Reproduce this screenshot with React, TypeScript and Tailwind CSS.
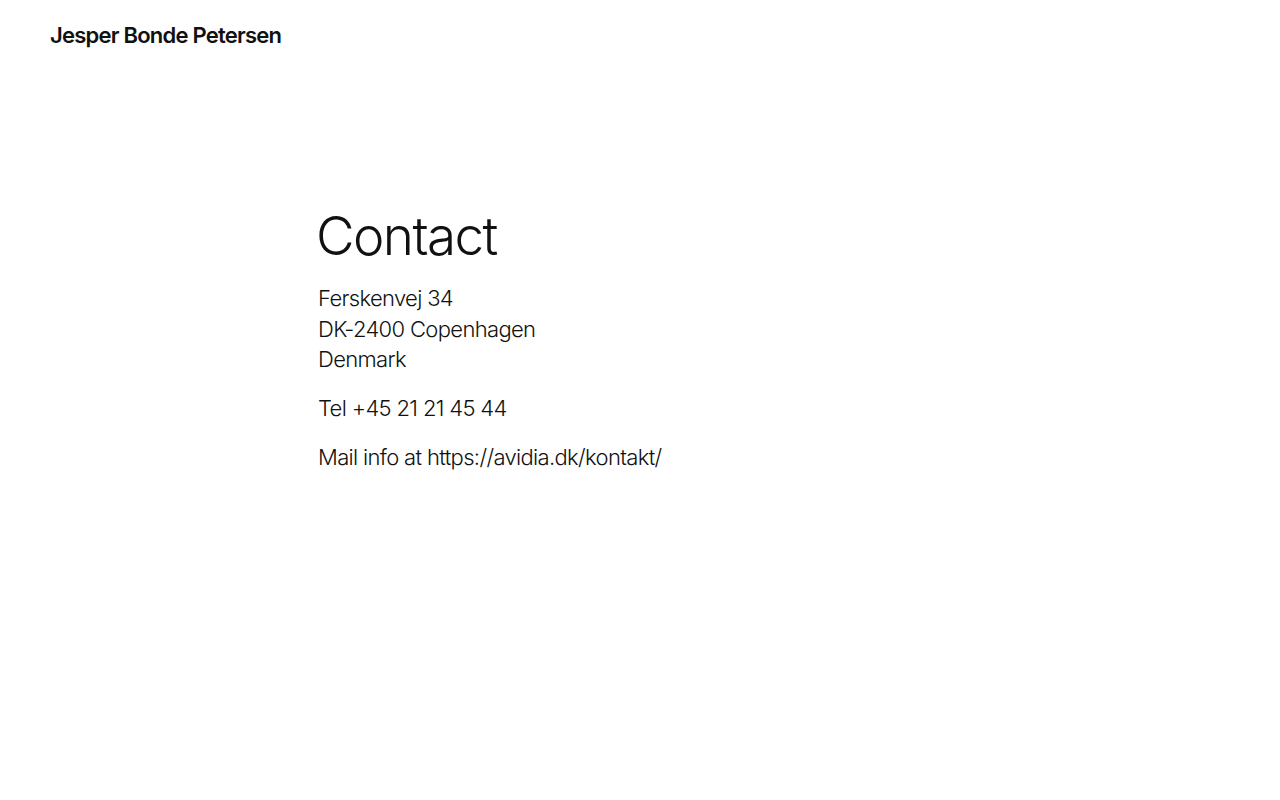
export default function App() {
  return (
    <div className="min-h-screen bg-white text-[#111111]" style={{ fontFamily: "Inter, 'Noto Sans', sans-serif" }}>
      <header className="px-[50px] pt-[20px]">
        <a className="text-[22px] font-semibold tracking-[-0.035em] leading-[30px]">Jesper Bonde Petersen</a>
      </header>

      <main className="pl-[318px] pt-[150px]">
        <h1 className="text-[53px] font-light leading-[72px] tracking-[-0.03em] -ml-[2px]">Contact</h1>
        <div className="mt-[11px] text-[22px] font-light leading-[30.5px] tracking-[-0.03em]">
          <p>
            Ferskenvej 34
            <br />
            DK-2400 Copenhagen
            <br />
            Denmark
          </p>
          <p className="mt-[18px]">Tel +45 21 21 45 44</p>
          <p className="mt-[19px]">Mail info at https://avidia.dk/kontakt/</p>
        </div>
      </main>
    </div>
  )
}
